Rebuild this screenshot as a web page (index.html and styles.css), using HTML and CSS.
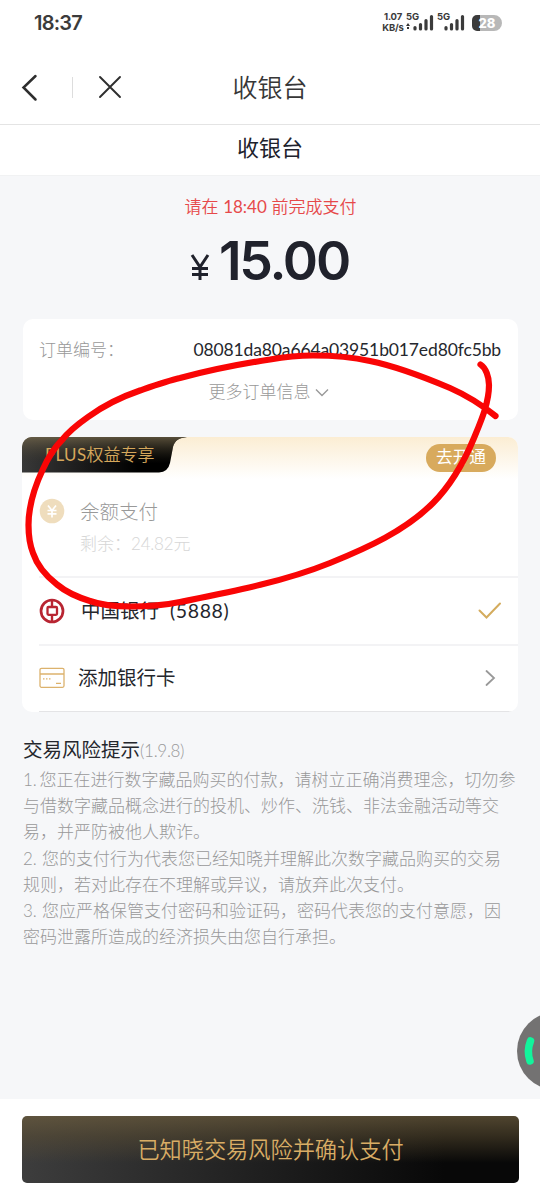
FILE: index.html
```html
<!DOCTYPE html>
<html lang="zh-CN">
<head>
<meta charset="utf-8">
<title>收银台</title>
<link rel="stylesheet" href="styles.css">
</head>
<body>
<div class="screen">
  <header class="status">
    <span class="clock">18:37</span>
    <div class="indicators">
      <div class="speed"><span>1.07</span><span>KB/s</span></div>
      <div class="signal"><span class="net">5G</span>
        <svg width="29" height="20" viewBox="0 0 29 20"><path d="M1 15l2-3 2 3zM2 16h2v2H2z" fill="#333"/><path d="M10 18v-1.500M15.500 18v-4.500M21 18v-8.500M26.500 18v-12.500" stroke="#3b3b3b" stroke-width="3.200" stroke-linecap="round"/></svg>
      </div>
      <div class="signal second"><span class="net">5G</span>
        <svg width="29" height="20" viewBox="0 0 29 20"><path d="M10 18v-1.500M15.500 18v-4.500M21 18v-8.500M26.500 18v-12.500" stroke="#3b3b3b" stroke-width="3.200" stroke-linecap="round"/></svg>
      </div>
      <div class="battery"><span>28</span></div>
    </div>
  </header>
  <nav class="navbar">
    <svg class="back" width="20" height="30" viewBox="0 0 20 30"><path d="M15.500 4L3.500 15.500L15.500 27.500" fill="none" stroke="#2e2e2e" stroke-width="2.500" stroke-linecap="round"/></svg>
    <i class="divider"></i>
    <svg class="close" width="24" height="24" viewBox="0 0 24 24"><path d="M2 2L22 22M22 2L2 22" stroke="#2e2e2e" stroke-width="1.900" stroke-linecap="round"/></svg>
    <h1>收银台</h1>
  </nav>
  <h2 class="subtitle">收银台</h2>
  <main>
    <p class="deadline">请在 <span>18:40</span> 前完成支付</p>
    <p class="amount"><span class="yen"><svg width="20" height="28" viewBox="0 0 20 28"><path d="M2 2L10 14L18 2M10 14V27M2 15.500H18M2 21.500H18" fill="none" stroke="#20222c" stroke-width="3"/></svg></span><span class="sum">15.00</span></p>
    <section class="card order">
      <div class="order-row"><span class="label">订单编号：</span><span class="number">08081da80a664a03951b017ed80fc5bb</span></div>
      <div class="more">更多订单信息<svg width="14" height="9" viewBox="0 0 14 9"><path d="M1 1.500L7 7.500L13 1.500" fill="none" stroke="#999" stroke-width="1.400"/></svg></div>
    </section>
    <section class="card methods">
      <div class="plus-bar">
        <div class="plus-tag">
          <svg width="165" height="36" viewBox="0 0 165 36"><defs><linearGradient id="tag" x1="0" y1="1" x2=".7" y2="1"><stop stop-color="#383838"/><stop offset="1" stop-color="#000"/></linearGradient><linearGradient id="shine" x1="0" y1="0" x2="0" y2="1"><stop stop-color="#75684c" stop-opacity=".75"/><stop offset=".75" stop-color="#383428" stop-opacity="0"/></linearGradient></defs><path d="M8 0H165C157 1 153 3 151 10L148 26Q146 35 137 35.500H0V8Q0 0 8 0Z" fill="url(#tag)"/><path d="M8 0H165C157 1 153 3 151 10L148 26Q146 35 137 35.500H0V8Q0 0 8 0Z" fill="url(#shine)"/></svg>
          <span><b>PLUS</b>权益专享</span>
        </div>
        <span class="open">去开通</span>
      </div>
      <div class="balance">
        <svg width="26" height="26" viewBox="0 0 26 26"><circle cx="13" cy="13" r="12.300" fill="#efddbd"/><path d="M9 7.500L13 12.500L17 7.500M13 12.500V19.500M8.500 12.500H17.500M8.500 15.800H17.500" fill="none" stroke="#fff" stroke-width="1.700"/></svg>
        <div class="balance-text"><span class="name">余额支付</span><span class="left">剩余：<b>24.82</b>元</span></div>
      </div>
      <div class="bank">
        <svg width="26" height="26" viewBox="0 0 26 26" fill="none" stroke="#b82532"><circle cx="13" cy="13" r="11" stroke-width="2.700"/><path d="M13 2V9.500M13 17V24" stroke-width="2.400"/><rect x="8.500" y="9" width="9.500" height="7.800" rx="1" stroke-width="2.300"/></svg>
        <span class="bank-name">中国银行<span class="tail">(5888)</span></span>
        <svg class="check" width="24" height="18" viewBox="0 0 24 18"><path d="M1.500 8.500L8.500 15.500L22 1.500" fill="none" stroke="#d4ac5e" stroke-width="2" stroke-linecap="round"/></svg>
      </div>
      <div class="add">
        <svg width="26" height="22" viewBox="0 0 26 22" fill="none" stroke="#dcb26d" stroke-width="1.300"><rect x="1" y="1.300" width="24" height="19" rx="1.500"/><path d="M1 7H25"/><path d="M4 11.800h1.500M7 11.800h1.500M10 11.800h1.500M17 16.300h5" /></svg>
        <span class="add-name">添加银行卡</span>
        <svg class="arrow" width="11" height="18" viewBox="0 0 11 18"><path d="M1.500 2L9 9L1.500 16" fill="none" stroke="#999" stroke-width="1.800" stroke-linecap="round"/></svg>
      </div>
    </section>
    <section class="risk">
      <h3>交易风险提示<span>(1.9.8)</span></h3>
      <p><span class="num one">1.</span>您正在进行数字藏品购买的付款，请树立正确消费理念，切勿参<br>与借数字藏品概念进行的投机、炒作、洗钱、非法金融活动等交<br>易，并严防被他人欺诈。</p>
      <p><span class="num">2.</span>您的支付行为代表您已经知晓并理解此次数字藏品购买的交易<br>规则，若对此存在不理解或异议，请放弃此次支付。</p>
      <p><span class="num">3.</span>您应严格保管支付密码和验证码，密码代表您的支付意愿，因<br>密码泄露所造成的经济损失由您自行承担。</p>
    </section>
  </main>
  <footer><button class="confirm">已知晓交易风险并确认支付</button></footer>
  <svg class="float-ball" width="24" height="78" viewBox="0 0 24 78"><circle cx="40" cy="39" r="39" fill="#737272"/><path d="M14.500 29Q10.500 39 14 49" fill="none" stroke="#12f49c" stroke-width="7.500" stroke-linecap="round"/></svg>
  <svg class="marker" width="540" height="1200" viewBox="0 0 540 1200"><path d="M480.500 364.500C486 368 489 377 489 385C489 403 481 421 474 438C464 462 451 485 433 503C405 531 367 548 330 563C283 582 230 592 180 602C163 605.500 147 606.500 130 606.500C114 606.500 101 605 90 601C77 597 66 592 57 584.500C46 576 37 565 33 553C29.500 544 28.500 534 28.500 525C28.500 507 34 488 43 469C48 458 54 448 62 440C69 431 78 424 88 417C103 406 121 397 140 390.500C153 386 167 381 180 378C210 370 240 364 270 359.500C284 357 299 355.500 313 355.500C332 355.500 352 357 370 361C397 366.500 424 377 450 388C467 395.500 482 405 495.500 416" fill="none" stroke="#f90505" stroke-width="6.200" stroke-linecap="round" stroke-linejoin="round"/></svg>
</div>
</body>
</html>
```
FILE: styles.css
```css
* { box-sizing: border-box; margin: 0; padding: 0; }
body { font-family: Lato, "Noto Sans CJK SC", sans-serif; background: #fff; color: #25272d; }
svg { display: block; flex: none; }
.screen { position: relative; width: 540px; height: 1200px; overflow: hidden; display: flex; flex-direction: column; background: #f6f7f9; }
.status { height: 48px; flex: none; display: flex; justify-content: space-between; padding: 10px 38px 0 34px; background: #fff; }
.clock { font: 600 20px/26px Inter, sans-serif; color: #3b3b3b; letter-spacing: -.8px; }
.indicators { display: flex; padding-top: 1px; }
.speed { width: 24px; display: flex; flex-direction: column; align-items: center; font: 700 9.5px/11px Inter, sans-serif; color: #3b3b3b; letter-spacing: -.2px; }
.signal { position: relative; width: 29px; height: 20px; }
.second { margin-left: 2px; }
.net { position: absolute; left: 1px; top: 0; font: 700 9.5px/11px Inter, sans-serif; color: #3b3b3b; }
.battery { width: 30px; height: 16px; margin: 4px 0 0 7px; border-radius: 5px 8px 8px 5px; text-align: center; font: 800 13px/16px Inter, sans-serif; color: #fff; background: linear-gradient(90deg, #3b3b3b 28%, #b8b8b8 28%); }
.navbar { position: relative; height: 77px; flex: none; display: flex; align-items: center; padding: 2px 20px 0; background: #fff; border-bottom: 1px solid #e4e4e4; }
.divider { width: 1px; height: 21px; margin: 0 25px 0 32px; background: #ddd; }
.navbar h1 { position: absolute; left: 0; right: 0; text-align: center; font-size: 25px; line-height: 36px; font-weight: 350; color: #373737; }
.subtitle { height: 51px; flex: none; background: #fff; border-bottom: 1px solid #f1f2f3; text-align: center; font-size: 22px; line-height: 45px; font-weight: 400; color: #20222c; }
main { flex: 1; padding: 18px 22px 0 23px; }
.deadline { height: 26px; text-align: center; font-size: 17px; line-height: 26px; font-weight: 350; color: #e6494a; }
.deadline span { font-weight: 400; }
.amount { height: 75px; display: flex; justify-content: center; align-items: flex-start; padding-right: 2px; }
.yen { width: 29px; padding-top: 33px; }
.sum { font: 600 53.500px/82px Inter, sans-serif; color: #20222c; letter-spacing: -2.2px; }
.card { background: #fff; border-radius: 10px; }
.order { height: 101px; margin-top: 24px; padding: 18px 17px 0 16px; }
.order-row { display: flex; justify-content: space-between; height: 42px; line-height: 26px; }
.label { font-size: 17px; font-weight: 300; color: #999; }
.number { font-size: 17.500px; letter-spacing: -.13px; white-space: nowrap; }
.more { display: flex; justify-content: center; align-items: center; gap: 4px; line-height: 26px; font-size: 17px; font-weight: 300; color: #999; padding-right: 3px; }
.methods { height: 275px; margin: 17px 0 0 -1px; overflow: hidden; }
.plus-bar { display: flex; justify-content: space-between; align-items: flex-start; height: 42px; background: linear-gradient(#fbedd3, #fff); }
.plus-tag { position: relative; }
.plus-tag span { position: absolute; left: 23px; top: 5px; font-size: 17px; line-height: 26px; font-weight: 350; color: #d6a85c; white-space: nowrap; }
.plus-tag b { font-weight: 400; letter-spacing: .3px; }
.open { width: 70px; height: 28px; margin: 7px 22px 0 0; border-radius: 14px; background: #d8aa5d; color: #fff; text-align: center; font-size: 16.700px; line-height: 27px; }
.balance { display: flex; height: 97px; padding: 19px 0 0 17px; gap: 15px; }
.balance-text { flex: 1; display: flex; flex-direction: column; }
.name { font-size: 19.500px; line-height: 28px; font-weight: 300; color: #999; }
.left { margin-top: 5px; font-size: 17px; line-height: 26px; font-weight: 300; color: #d6d6d6; }
.left b { font-weight: 300; letter-spacing: -.2px; }
.bank { display: flex; align-items: center; height: 68px; margin-left: 17px; padding-right: 16px; gap: 16px; border-top: 2px solid #f3f3f5; font-size: 19.500px; }
.bank-name, .add-name { padding-bottom: 4px; }
.tail { margin-left: 11px; letter-spacing: .6px; }
.check, .arrow { margin-left: auto; }
.add { display: flex; align-items: center; height: 68px; margin-left: 17px; padding-right: 22px; gap: 13px; border-top: 2px solid #f3f3f5; border-bottom: 1px solid #e4e4e6; font-size: 19.500px; }
.add svg { margin-bottom: 2px; }
.risk { padding-top: 22px; color: #999; font-size: 17px; line-height: 26.200px; font-weight: 300; white-space: nowrap; }
.risk h3 { margin-bottom: 1px; font-size: 19.500px; line-height: 31px; font-weight: 400; color: #25272d; }
.risk h3 span { font-size: 17px; letter-spacing: -.3px; font-weight: 300; color: #999; }
.num { display: inline-block; width: 19px; }
.one { width: 16.500px; }
footer { height: 101px; flex: none; padding: 17px 21px 0 22px; background: #fff; }
.confirm { display: block; width: 497px; height: 67px; padding-bottom: 3px; border: 0; border-radius: 5px; font: 350 22.200px/64px "Noto Sans CJK SC", sans-serif; color: #d9ad65; background: linear-gradient(#6b5c3eb8, #5e503480 30%, #0000 70%), linear-gradient(90deg, #3d3d3d, #080808 85%); }
.float-ball { position: absolute; right: 0; top: 1012px; }
.marker { position: absolute; left: 0; top: 0; pointer-events: none; }
```
